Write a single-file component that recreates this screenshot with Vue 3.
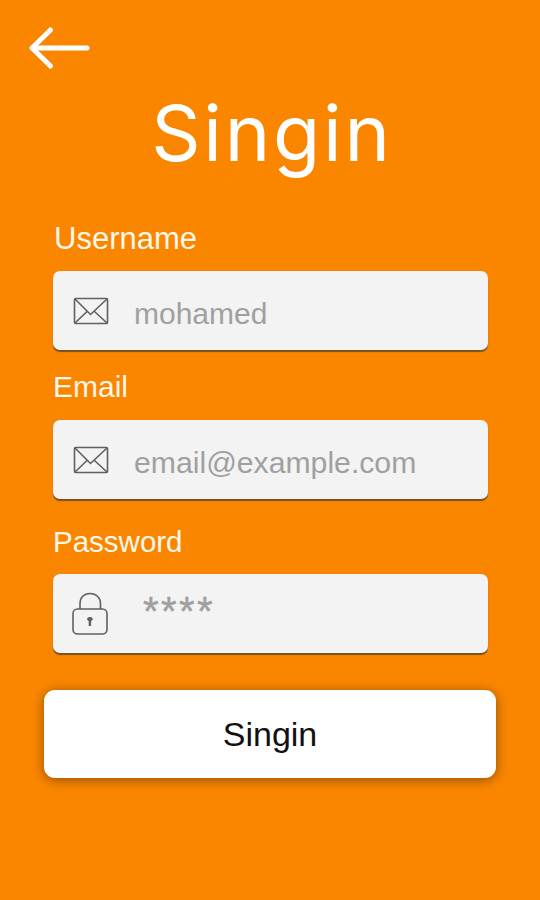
<script setup>
import { reactive } from 'vue';

// Fields shown in the form
const fields = [
  { name: "username", label: "Username", type: "text", placeholder: "mohamed", icon: "mail" },
  { name: "email", label: "Email", type: "email", placeholder: "email@example.com", icon: "mail" },
  { name: "password", label: "Password", type: "password", placeholder: "****", icon: "lock" }
];

const form = reactive({
  username: "",
  email: "",
  password: ""
});
</script>

<template>
  <div class="screen">
    <button class="back-btn" aria-label="Back">
      <svg width="62" height="44" viewBox="0 0 62 44">
        <path d="M4 22H59" />
        <path d="M22.5 4L4 22L22.5 40" />
      </svg>
    </button>

    <h1>Singin</h1>

    <form @submit.prevent>
      <div v-for="field in fields" :key="field.name" class="field" :class="field.name">
        <label :for="field.name">{{ field.label }}</label>
        <div class="input-box">
          <svg v-if="field.icon === 'mail'" class="mail-icon" width="36" height="28" viewBox="0 0 36 28">
            <rect x="1.5" y="1.5" width="33" height="25" rx="1" />
            <path d="M2 2L17.5 17.5L34 2M2 26L14 14.5M34 26L21.5 14.5" />
          </svg>
          <svg v-else class="lock-icon" width="36" height="44" viewBox="0 0 36 44">
            <rect x="1" y="17" width="34" height="25" rx="4.5" />
            <path d="M8 17V11.5C8 5.5 12 1.5 18 1.5S28.5 5.5 28.5 11.5V17" />
            <path class="keyhole" d="M15 27.5a2.9 2.5 0 0 1 5.8 0l-1.7 1.8v4.7h-2.4V29.3z" />
          </svg>
          <input :id="field.name" v-model="form[field.name]" :type="field.type" :placeholder="field.placeholder" />
        </div>
      </div>

      <button class="submit-btn" type="submit">Singin</button>
    </form>
  </div>
</template>

<style>
body {
  background-color: #fa8600;
}
</style>

<style scoped>
.screen {
  box-sizing: border-box;
  height: 900px;
  padding-top: 26px;
  overflow: hidden;
  background-color: #fa8600;
  font-family: "Liberation Sans", Arial, sans-serif;
}

.back-btn {
  display: block;
  margin-left: 28px;
  padding: 0;
  border: none;
  background: none;
  cursor: pointer;
}

.back-btn svg {
  display: block;
  fill: none;
  stroke: #fff;
  stroke-width: 5;
  stroke-linecap: round;
  stroke-linejoin: round;
}

h1 {
  height: 90px;
  margin: 18px 0 44px;
  padding-left: 4px;
  color: #fff;
  font-family: Inter, sans-serif;
  font-size: 77px;
  font-weight: 400;
  line-height: 91px;
  letter-spacing: 2.8px;
  text-align: center;
}

form {
  display: flex;
  flex-direction: column;
}

.field {
  margin: 0 52px 20px 53px;
}

.field.email {
  margin-bottom: 26px;
}

.field.password {
  margin-bottom: 37px;
}

label {
  display: block;
  margin-bottom: 15px;
  color: #fff8ea;
  font-size: 30px;
  line-height: 34px;
}

.username label {
  padding-left: 1px;
  font-size: 31px;
}

.email label {
  margin-bottom: 16px;
}

.password label {
  font-size: 29.5px;
}

.input-box {
  display: flex;
  align-items: center;
  height: 79px;
  border-radius: 7px;
  background-color: #f3f3f3;
  box-shadow: 0 2px 1px rgba(85, 65, 45, 0.8);
}

.input-box svg {
  flex: none;
  margin-left: 20px;
  fill: none;
  stroke: #606060;
  stroke-width: 1.6;
}

.lock-icon {
  margin-top: 1px;
}

.input-box .lock-icon {
  margin-left: 19px;
}

.lock-icon .keyhole {
  fill: #606060;
  stroke: none;
}

input {
  box-sizing: border-box;
  flex: 1;
  min-width: 0;
  height: 79px;
  padding: 7px 10px 0 25px;
  border: none;
  outline: none;
  background: none;
  color: #555;
  font-family: inherit;
  font-size: 30px;
}

input::placeholder {
  color: #a0a0a0;
  opacity: 1;
}

.email input {
  font-size: 30.2px;
}

.password input {
  padding: 0 10px 4px 35px;
  font-size: 40px;
  letter-spacing: 2.4px;
}

.password input::placeholder {
  -webkit-text-stroke: 0.5px #a0a0a0;
}

.submit-btn {
  height: 88px;
  margin: 0 44px;
  padding: 0;
  border: none;
  border-radius: 11px;
  background-color: #fff;
  box-shadow: 0 2px 12px rgba(90, 50, 0, 0.65);
  color: #111;
  font-family: inherit;
  font-size: 34px;
  cursor: pointer;
}
</style>
